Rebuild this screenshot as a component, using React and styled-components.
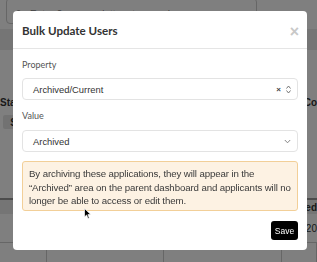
import React from "react";
import styled, { createGlobalStyle } from "styled-components";

const Global = createGlobalStyle`
  html, body { margin: 0; padding: 0; background: #fff; }
  body { width: 317px; height: 262px; overflow: hidden; font-family: "Liberation Sans", Arial, sans-serif; }
`;

const Page = styled.div`
  width: 317px;
  height: 262px;
  display: flex;
  flex-direction: column;
  background: #fff;
`;

const SearchRow = styled.div`
  height: 24px;
  padding: 0 60px 0 6px;
  display: flex;
  align-items: flex-end;
`;

const Search = styled.div`
  flex: 1;
  height: 26px;
  margin-top: -6px;
  border: 1px solid #ccc;
  border-radius: 4px;
  display: flex;
  align-items: center;
  gap: 6px;
  padding: 0 8px;
  font-size: 10px;
  color: #888;
  box-sizing: border-box;
  padding-top: 6px;
`;

const Band = styled.div`
  height: ${(p) => p.h}px;
  background: ${(p) => p.bg || "#fff"};
  display: flex;
  align-items: center;
  justify-content: space-between;
  font-size: 10px;
  font-weight: bold;
  color: #333;
`;

const Cell = styled.span`
  font-weight: ${(p) => (p.light ? "normal" : "bold")};
`;

const SmallBtn = styled.div`
  margin-left: 3px;
  width: 14px;
  height: 14px;
  background: #e4e4e4;
  border-radius: 2px;
  font-size: 10px;
  font-weight: bold;
  display: flex;
  align-items: center;
  justify-content: flex-end;
`;

const Grid = styled.div`
  flex: 1;
  display: grid;
  grid-template-columns: 47px 117px 118px 1fr;
  border-top: 1px solid #ccc;
`;

const GridCell = styled.div`
  border-right: 1px solid #ccc;
`;

const Overlay = styled.div`
  position: fixed;
  inset: 0;
  background: rgba(0, 0, 0, 0.5);
`;

const Modal = styled.div`
  position: fixed;
  left: 13px;
  top: 11px;
  width: 294px;
  height: 239px;
  background: #fff;
  border-radius: 4px;
  display: flex;
  flex-direction: column;
  box-sizing: border-box;
`;

const Header = styled.div`
  height: 38px;
  border-bottom: 1px solid #e5e5e5;
  display: flex;
  align-items: center;
  justify-content: space-between;
  padding: 0 9px 0 9px;
  box-sizing: border-box;
`;

const Title = styled.h4`
  margin: 0;
  font-family: Lato, "Liberation Sans", sans-serif;
  font-size: 11.6px;
  font-weight: 700;
  color: #333;
  padding-top: 1px;
`;

const Close = styled.span`
  font-family: "Liberation Sans", Arial, sans-serif;
  font-size: 16px;
  font-weight: bold;
  color: #c8c8c8;
  line-height: 1;
  padding-top: 4px;
  margin-right: -1px;
`;

const Body = styled.div`
  padding: 8px 9px 0;
  display: flex;
  flex-direction: column;
`;

const Label = styled.label`
  font-family: Lato, "Liberation Sans", sans-serif;
  font-size: 9px;
  color: #555;
  height: 14px;
  display: flex;
  align-items: center;
  margin-bottom: ${(p) => p.mb}px;
`;

const Select = styled.div`
  height: 22px;
  border: 1px solid #e3e3e3;
  border-radius: 4px;
  display: flex;
  align-items: center;
  padding: 0 6px 0 10px;
  box-sizing: border-box;
  font-size: 9.4px;
  color: #333;
  margin-bottom: ${(p) => p.mb}px;
`;

const SelText = styled.span`
  flex: 1;
`;

const Clear = styled.span`
  font-size: 8px;
  font-weight: bold;
  color: #444;
  margin-right: 5px;
`;

const Warning = styled.div`
  height: 50px;
  box-sizing: border-box;
  border: 1px solid #f2cf98;
  background: #fdf2e3;
  border-radius: 3px;
  padding: 5px 2px 4px 6px;
  font-size: 9.7px;
  letter-spacing: -0.12px;
  line-height: 13.5px;
  color: #3a3a3a;
`;

const Footer = styled.div`
  display: flex;
  justify-content: flex-end;
  padding: 10px 9px 0;
`;

const SaveBtn = styled.button`
  width: 27px;
  height: 19px;
  background: #000;
  color: #fff;
  border: none;
  border-radius: 3px;
  font-family: "Liberation Sans", Arial, sans-serif;
  font-size: 8.5px;
  padding: 0;
`;

const Cursor = styled.svg`
  position: fixed;
  left: 84px;
  top: 208px;
`;

export default function App() {
  return (
    <>
      <Global />
      <Page>
        <SearchRow>
          <Search>
            <svg width="9" height="9" viewBox="0 0 10 10">
              <circle cx="4" cy="4" r="3" fill="none" stroke="#888" strokeWidth="1.2" />
              <line x1="6.3" y1="6.3" x2="9" y2="9" stroke="#888" strokeWidth="1.2" />
            </svg>
            Enter 2 or more letters to search
          </Search>
        </SearchRow>
        <Band h={5} />
        <Band h={21} bg="#ebebeb" />
        <Band h={40} />
        <Band h={24}>
          <Cell>Stat</Cell>
          <Cell>Co</Cell>
        </Band>
        <Band h={16}>
          <SmallBtn>S</SmallBtn>
        </Band>
        <Band h={68} />
        <Band h={2} bg="#999" />
        <Band h={14} bg="#ebebeb">
          <span />
          <Cell>ed</Cell>
        </Band>
        <Band h={28}>
          <span />
          <Cell light>/20</Cell>
        </Band>
        <Grid>
          <GridCell />
          <GridCell />
          <GridCell />
          <GridCell />
        </Grid>
      </Page>
      <Overlay />
      <Modal>
        <Header>
          <Title>Bulk Update Users</Title>
          <Close>×</Close>
        </Header>
        <Body>
          <Label mb={7}>Property</Label>
          <Select mb={8}>
            <SelText>Archived/Current</SelText>
            <Clear>×</Clear>
            <svg width="5" height="9" viewBox="0 0 5 9">
              <path d="M0.5 3.5 L2.5 1 L4.5 3.5 M0.5 5.5 L2.5 8 L4.5 5.5" fill="none" stroke="#666" strokeWidth="0.9" />
            </svg>
          </Select>
          <Label mb={8}>Value</Label>
          <Select mb={9}>
            <SelText>Archived</SelText>
            <svg width="7" height="5" viewBox="0 0 7 5">
              <path d="M0.8 1 L3.5 3.8 L6.2 1" fill="none" stroke="#777" strokeWidth="0.9" />
            </svg>
          </Select>
          <Warning>
            By archiving these applications, they will appear in the “Archived” area on the parent dashboard and applicants will no longer be able to access or edit them.
          </Warning>
        </Body>
        <Footer>
          <SaveBtn>Save</SaveBtn>
        </Footer>
      </Modal>
      <Cursor width="8" height="12" viewBox="0 0 8 12">
        <path d="M0.5 0.5 L0.5 9 L2.6 7 L4 10.5 L5.3 10 L3.9 6.6 L6.8 6.6 Z" fill="#000" stroke="#fff" strokeWidth="0.7" />
      </Cursor>
    </>
  );
}
